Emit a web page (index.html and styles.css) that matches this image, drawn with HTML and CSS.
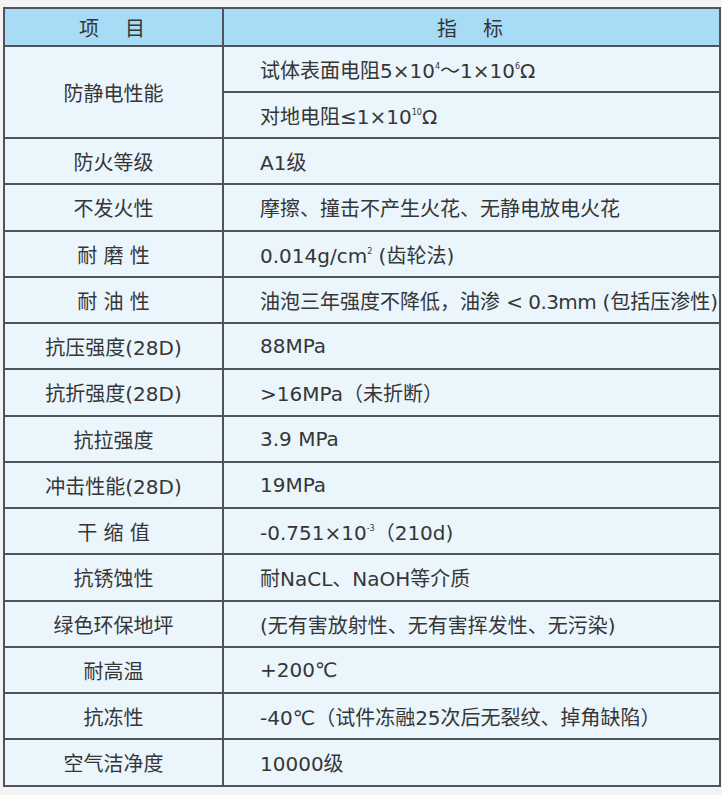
FILE: index.html
```html
<!DOCTYPE html>
<html lang="zh-CN">
<head>
<meta charset="utf-8">
<link rel="stylesheet" href="styles.css">
</head>
<body>
<div class="page">
<table class="spec">
  <colgroup><col class="c1"><col class="c2"></colgroup>
  <thead>
    <tr><th>项　目</th><th>指　标</th></tr>
  </thead>
  <tbody>
    <tr><td class="name" rowspan="2">防静电性能</td><td class="val">试体表面电阻5×10<sup>4</sup>～1×10<sup>6</sup>Ω</td></tr>
    <tr><td class="val">对地电阻≤1×10<sup>10</sup>Ω</td></tr>
    <tr><td class="name">防火等级</td><td class="val">A1级</td></tr>
    <tr><td class="name">不发火性</td><td class="val">摩擦、撞击不产生火花、无静电放电火花</td></tr>
    <tr><td class="name">耐 磨 性</td><td class="val">0.014g/cm<sup>2</sup> (齿轮法)</td></tr>
    <tr><td class="name">耐 油 性</td><td class="val">油泡三年强度不降低，油渗 <span class="tight">&lt; 0.3mm</span> (包括压渗性)</td></tr>
    <tr><td class="name">抗压强度(28D)</td><td class="val">88MPa</td></tr>
    <tr><td class="name">抗折强度(28D)</td><td class="val">&gt;16MPa（未折断）</td></tr>
    <tr><td class="name">抗拉强度</td><td class="val">3.9 MPa</td></tr>
    <tr><td class="name">冲击性能(28D)</td><td class="val">19MPa</td></tr>
    <tr><td class="name">干 缩 值</td><td class="val">-0.751×10<sup>-3</sup>（210d)</td></tr>
    <tr><td class="name">抗锈蚀性</td><td class="val">耐NaCL、NaOH等介质</td></tr>
    <tr><td class="name">绿色环保地坪</td><td class="val">(无有害放射性、无有害挥发性、无污染)</td></tr>
    <tr><td class="name">耐高温</td><td class="val">+200℃</td></tr>
    <tr><td class="name">抗冻性</td><td class="val">-40℃（试件冻融25次后无裂纹、掉角缺陷）</td></tr>
    <tr><td class="name">空气洁净度</td><td class="val">10000级</td></tr>
  </tbody>
</table>
</div>
</body>
</html>
```
FILE: styles.css
```css
html, body {
  margin: 0;
  padding: 0;
  background: #f3f3f3;
}
.page {
  padding: 7px 1px 0 3px;
}
.spec {
  width: 718px;
  border-collapse: collapse;
  table-layout: fixed;
  font-family: "DejaVu Sans", "Noto Sans CJK SC", sans-serif;
  font-size: 20px;
  color: #363636;
}
.c1 { width: 219px; }
.spec th, .spec td {
  border: 2px solid #4f545c;
  padding: 0;
  font-weight: normal;
}
.spec th {
  background: #a8dcf6;
  height: 36px;
  text-align: center;
  letter-spacing: 3px;
}
.spec td {
  background: #eaf5fc;
  height: 44px;
}
.spec tbody tr:nth-child(4n) td {
  height: 45px;
}
.spec td.name {
  text-align: center;
}
.spec td.val {
  padding-left: 36px;
  white-space: nowrap;
}
.spec .tight {
  letter-spacing: -0.6px;
}
.spec sup {
  font-size: 8px;
  vertical-align: 9px;
  line-height: 0;
}
```
